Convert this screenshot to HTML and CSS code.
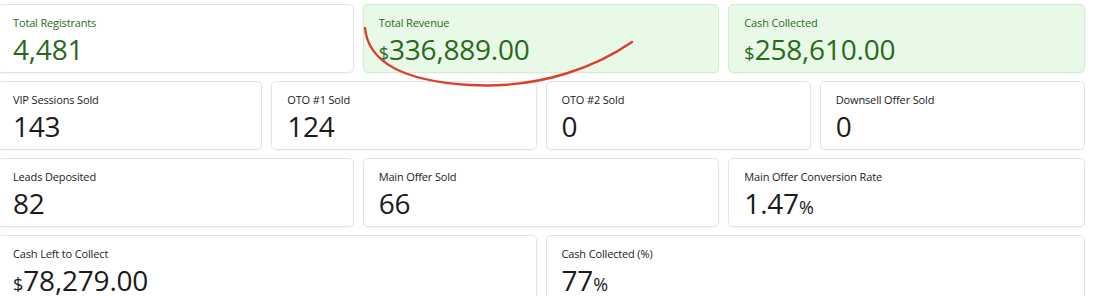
FILE: index.html
```html
<!DOCTYPE html>
<html>
<head>
<meta charset="utf-8">
<link rel="stylesheet" href="styles.css">
</head>
<body>
<div class="page">
  <div class="row cols-3">
    <div class="card">
      <div class="label green-text">Total Registrants</div>
      <div class="value green-text">4,481</div>
    </div>
    <div class="card green">
      <div class="label green-text">Total Revenue</div>
      <div class="value green-text"><span class="unit">$</span>336,889.00</div>
    </div>
    <div class="card green">
      <div class="label green-text">Cash Collected</div>
      <div class="value green-text"><span class="unit">$</span>258,610.00</div>
    </div>
  </div>
  <div class="row cols-4">
    <div class="card">
      <div class="label">VIP Sessions Sold</div>
      <div class="value">143</div>
    </div>
    <div class="card">
      <div class="label">OTO #1 Sold</div>
      <div class="value">124</div>
    </div>
    <div class="card">
      <div class="label">OTO #2 Sold</div>
      <div class="value">0</div>
    </div>
    <div class="card">
      <div class="label">Downsell Offer Sold</div>
      <div class="value">0</div>
    </div>
  </div>
  <div class="row cols-3">
    <div class="card">
      <div class="label">Leads Deposited</div>
      <div class="value">82</div>
    </div>
    <div class="card">
      <div class="label">Main Offer Sold</div>
      <div class="value">66</div>
    </div>
    <div class="card">
      <div class="label">Main Offer Conversion Rate</div>
      <div class="value">1.47<span class="unit">%</span></div>
    </div>
  </div>
  <div class="row cols-2">
    <div class="card">
      <div class="label">Cash Left to Collect</div>
      <div class="value"><span class="unit">$</span>78,279.00</div>
    </div>
    <div class="card">
      <div class="label">Cash Collected (%)</div>
      <div class="value">77<span class="unit">%</span></div>
    </div>
  </div>
  <svg class="scribble" width="1100" height="296" viewBox="0 0 1100 296" aria-hidden="true">
    <path d="M365,28 C368,60 400,81 470,85 C545,89 600,64 632,42" fill="none" stroke="#d9412c" stroke-width="2.4" stroke-linecap="round"/>
  </svg>
</div>
</body>
</html>
```

FILE: styles.css
```css
html, body {
  margin: 0;
  padding: 0;
  background: #ffffff;
  overflow: hidden;
}

body {
  font-family: "Open Sans", "Noto Sans", "Liberation Sans", sans-serif;
  color: #1f1f1f;
}

.page {
  position: relative;
  width: 1088px;
  margin-left: -3px;
  padding-top: 4px;
  display: flex;
  flex-direction: column;
  gap: 8px;
}

.row {
  display: grid;
  gap: 9px;
}

.cols-2 { grid-template-columns: repeat(2, 1fr); }
.cols-3 { grid-template-columns: repeat(3, 1fr); }
.cols-4 { grid-template-columns: repeat(4, 1fr); }

.card {
  height: 69px;
  box-sizing: border-box;
  padding: 11px 14px 0 15px;
  background: #ffffff;
  border: 1px solid #e4e4e4;
  border-radius: 5px;
  box-shadow: 0 1px 2px rgba(0, 0, 0, 0.04);
}

.card.green {
  background: #e9f9e8;
  border-color: #d3ecd1;
}

.label {
  font-size: 11px;
  line-height: 14px;
  font-weight: 500;
  letter-spacing: -0.15px;
  color: #222222;
}

.value {
  font-size: 28px;
  line-height: 38px;
  letter-spacing: -0.2px;
  color: #1b1b1b;
}

.unit {
  font-size: 18px;
  letter-spacing: 0;
}

.green-text {
  color: #2b6a1e;
}

.value.green-text {
  color: #286a1a;
}

.scribble {
  position: absolute;
  left: 3px;
  top: 0;
  pointer-events: none;
}
```
